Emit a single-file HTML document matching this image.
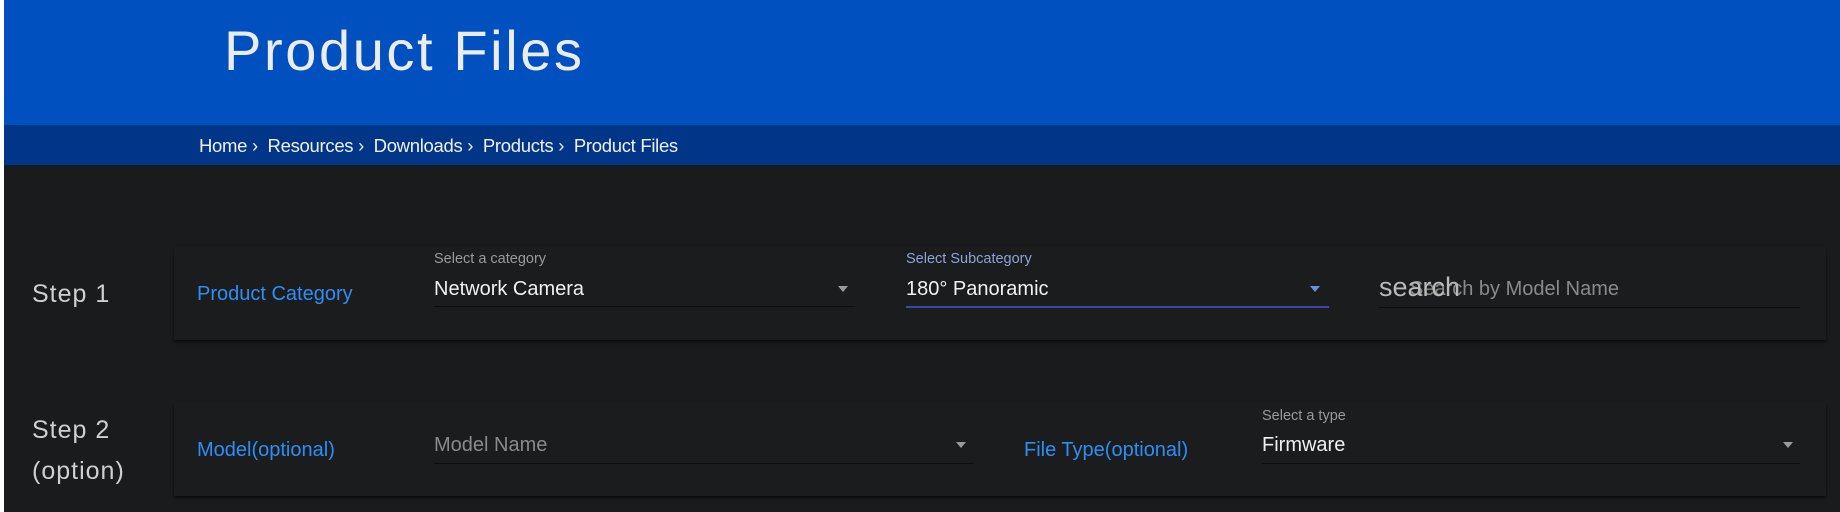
<!DOCTYPE html>
<html><head><meta charset="utf-8"><style>
*{margin:0;padding:0;box-sizing:border-box}
body{width:1840px;height:512px;overflow:hidden;background:#fff;font-family:"Liberation Sans",sans-serif;position:relative}
.wrap{position:absolute;left:4px;top:0;width:1836px;height:512px;background:#1a1b1d}
.hdr{position:absolute;left:0;top:0;width:100%;height:125px;background:#0050c0}
.title{position:absolute;left:220px;top:18px;font-size:56px;color:#ececec;letter-spacing:2.6px}
.bc{position:absolute;left:0;top:125px;width:100%;height:40px;background:#003587}
.bc span{position:absolute;left:195px;top:10px;font-size:18.5px;color:#f0f0f0;letter-spacing:-0.3px;white-space:pre}
.card{position:absolute;left:170px;width:1652px;background:#1b1c1e;box-shadow:0 2px 3px rgba(0,0,0,.6)}
.a{position:absolute;white-space:nowrap}
.step{color:#cfcfcf;font-size:25px;letter-spacing:1px}
.lbl{color:#2d8ff5;font-size:20px}
.sm{color:#9a9a9a;font-size:14.5px}
.val{color:#f0f0f0;font-size:20px}
.ph{color:#8a8a8a;font-size:20px}
.line{position:absolute;height:1px;background:#0e0e0f}
.arr{position:absolute;width:0;height:0;border-left:5.5px solid transparent;border-right:5.5px solid transparent;border-top:6px solid #9a9a9a}
</style></head><body>
<div class="wrap">
<div class="hdr"></div>
<div class="title">Product Files</div>
<div class="bc"><span>Home ›  Resources ›  Downloads ›  Products ›  Product Files</span></div>

<div class="card" style="top:247px;height:93px"></div>
<div class="card" style="top:402px;height:94px"></div>

<div class="a step" style="left:28px;top:280px">Step 1</div>
<div class="a lbl" style="left:193px;top:283px">Product Category</div>
<div class="a sm" style="left:430px;top:251px">Select a category</div>
<div class="a val" style="left:430px;top:278px">Network Camera</div>
<div class="arr" style="left:834px;top:286px"></div>
<div class="line" style="left:430px;top:306px;width:421px"></div>

<div class="a sm" style="left:902px;top:251px;color:#8da2d6">Select Subcategory</div>
<div class="a val" style="left:902px;top:278px">180° Panoramic</div>
<div class="arr" style="left:1306px;top:286px;border-top-color:#6c8fd8"></div>
<div class="line" style="left:902px;top:306px;width:423px;height:2px;background:#3c4aa2"></div>

<div class="a ph" style="left:1406px;top:278px">Search by Model Name</div>
<div class="a" style="left:1375px;top:272px;font-size:27px;color:#b9b9b9">search</div>
<div class="line" style="left:1375px;top:307px;width:421px"></div>

<div class="a step" style="left:28px;top:416px">Step 2</div>
<div class="a step" style="left:28px;top:457px">(option)</div>
<div class="a lbl" style="left:193px;top:439px">Model(optional)</div>
<div class="a ph" style="left:430px;top:434px">Model Name</div>
<div class="arr" style="left:952px;top:442px"></div>
<div class="line" style="left:430px;top:463px;width:539px"></div>

<div class="a lbl" style="left:1020px;top:439px">File Type(optional)</div>
<div class="a sm" style="left:1258px;top:408px">Select a type</div>
<div class="a val" style="left:1258px;top:434px">Firmware</div>
<div class="arr" style="left:1779px;top:442px"></div>
<div class="line" style="left:1258px;top:463px;width:538px"></div>
</div>
</body></html>
